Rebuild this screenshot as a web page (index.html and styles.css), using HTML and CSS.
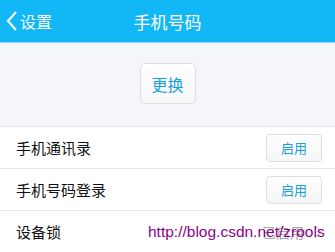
FILE: index.html
```html
<!DOCTYPE html>
<html>
<head>
<meta charset="utf-8">
<link rel="stylesheet" href="styles.css">
</head>
<body>
<div class="header">
  <div class="back">
    <svg class="chev" width="12" height="22" viewBox="0 0 12 22"><path d="M10 2 L2 11 L10 20" fill="none" stroke="#fff" stroke-width="2"/></svg>
    <span>设置</span>
  </div>
  <div class="title">手机号码</div>
</div>
<div class="top">
  <div class="change">更换</div>
</div>
<div class="list">
  <div class="row"><span class="label">手机通讯录</span><span class="btn">启用</span></div>
  <div class="row"><span class="label">手机号码登录</span><span class="btn">启用</span></div>
  <div class="row"><span class="label">设备锁</span><span class="status">已启用<svg class="arrow" width="8" height="14" viewBox="0 0 8 14"><path d="M1 1 L7 7 L1 13" fill="none" stroke="#c8c8c8" stroke-width="1.2"/></svg></span></div>
</div>
<div class="wm">http://blog.csdn.net/zrools</div>
</body>
</html>
```
FILE: styles.css
```css
html, body { margin: 0; padding: 0; }
body {
  width: 335px; height: 252px; overflow: hidden; position: relative;
  font-family: "Noto Sans CJK SC", "Liberation Sans", sans-serif;
  background: #fff;
}
.header {
  height: 42px; background: #12b7f5; position: relative;
  display: flex; align-items: center; justify-content: center;
  border-bottom: 1px solid #8fdcf9;
}
.back {
  position: absolute; left: 6px; top: 0; height: 42px;
  display: flex; align-items: center; color: #fff; font-size: 16px;
}
.chev { margin-right: 2px; }
.title { color: #fff; font-size: 17px; }
.top {
  height: 83px; background: #f5f6f9; border-bottom: 1px solid #e4e5e8;
  display: flex; justify-content: center; align-items: flex-start;
}
.change {
  margin-top: 20px; width: 54px; height: 39px; box-sizing: content-box;
  border: 1px solid #dcdde0; border-radius: 5px;
  background: linear-gradient(#fefefe, #f6f7f8);
  display: flex; align-items: center; justify-content: center;
  color: #1aa0d6; font-size: 16px;
}
.list { background: #fff; }
.row {
  height: 41px; border-bottom: 1px solid #e6e6e8;
  display: flex; align-items: center; justify-content: space-between;
  padding: 0 13px 0 16px;
}
.label { font-size: 15px; color: #111; }
.btn {
  width: 54px; height: 26px; border: 1px solid #dcdde0; border-radius: 4px;
  background: linear-gradient(#fefefe, #f5f6f7);
  display: flex; align-items: center; justify-content: center;
  color: #1aa0d6; font-size: 13px;
}
.status { color: #a8a8a8; font-size: 14px; display: flex; align-items: center; }
.arrow { margin-left: 10px; }
.wm {
  position: absolute; left: 148px; top: 223px;
  font-family: "Liberation Sans", Arial, sans-serif; font-size: 15.5px; color: #8b008b;
}
```
